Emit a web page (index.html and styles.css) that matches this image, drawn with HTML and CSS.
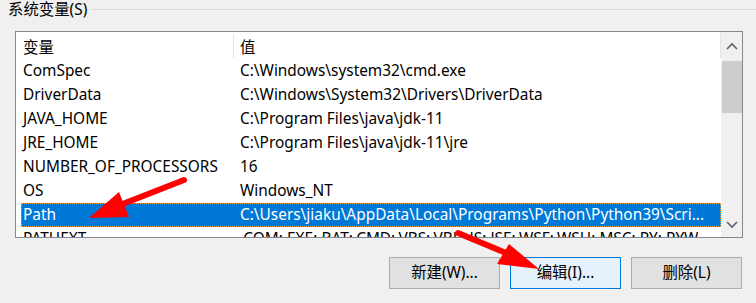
FILE: index.html
```html
<!DOCTYPE html>
<html lang="zh-CN">
<head>
<meta charset="utf-8">
<title>系统变量</title>
<link rel="stylesheet" href="styles.css">
</head>
<body>
<div class="page">
  <div class="group">
    <span class="group-title">系统变量(S)</span>
    <span class="group-line"></span>
  </div>
  <div class="listbox">
    <div class="list-content">
      <div class="header">
        <div class="hcell hc1">变量</div>
        <div class="hcell hc2">值</div>
      </div>
      <div class="row"><div class="c1">ComSpec</div><div class="c2">C:\Windows\system32\cmd.exe</div></div>
      <div class="row"><div class="c1">DriverData</div><div class="c2">C:\Windows\System32\Drivers\DriverData</div></div>
      <div class="row"><div class="c1">JAVA_HOME</div><div class="c2">C:\Program Files\java\jdk-11</div></div>
      <div class="row"><div class="c1">JRE_HOME</div><div class="c2">C:\Program Files\java\jdk-11\jre</div></div>
      <div class="row"><div class="c1">NUMBER_OF_PROCESSORS</div><div class="c2">16</div></div>
      <div class="row"><div class="c1">OS</div><div class="c2">Windows_NT</div></div>
      <div class="row selected"><div class="c1">Path</div><div class="c2">C:\Users\jiaku\AppData\Local\Programs\Python\Python39\Scri...</div></div>
      <div class="row"><div class="c1">PATHEXT</div><div class="c2">.COM;.EXE;.BAT;.CMD;.VBS;.VBE;.JS;.JSE;.WSF;.WSH;.MSC;.PY;.PYW</div></div>
    </div>
    <div class="scrollbar">
      <div class="sb-btn sb-up">
        <svg width="12" height="8" viewBox="0 0 12 8"><path d="M1 7 L6 2 L11 7" fill="none" stroke="#606060" stroke-width="1.6"/></svg>
      </div>
      <div class="sb-thumb"></div>
      <div class="sb-space"></div>
      <div class="sb-btn sb-down">
        <svg width="12" height="8" viewBox="0 0 12 8"><path d="M1 1 L6 6 L11 1" fill="none" stroke="#606060" stroke-width="1.6"/></svg>
      </div>
    </div>
  </div>
  <div class="buttons">
    <button class="btn">新建(W)...</button>
    <button class="btn btn-default">编辑(I)...</button>
    <button class="btn">删除(L)</button>
  </div>
  <svg class="arrows" width="756" height="303" viewBox="0 0 756 303">
    <line x1="184" y1="180" x2="120" y2="205" stroke="#ff0000" stroke-width="6" stroke-linecap="round"/>
    <polygon points="89,218 119,192 129,217" fill="#ff0000"/>
    <line x1="458" y1="233" x2="506" y2="253" stroke="#ff0000" stroke-width="6" stroke-linecap="round"/>
    <polygon points="539,269 509,244 497,264" fill="#ff0000"/>
  </svg>
</div>
</body>
</html>
```
FILE: styles.css
```css
* { box-sizing: border-box; }
html, body { margin: 0; padding: 0; }
body {
  background: #f0f0f0;
  font-family: "Noto Sans", "Noto Sans CJK SC", sans-serif;
  font-size: 15.4px;
  color: #000;
}
.page {
  position: relative;
  width: 756px;
  height: 303px;
  overflow: hidden;
  background: #f0f0f0;
}
.group {
  display: flex;
  height: 19px;
  padding-left: 8px;
}
.group-title {
  line-height: 19px;
  white-space: nowrap;
}
.group-line {
  flex: 1;
  margin-top: 9px;
  margin-left: 3px;
  height: 0;
  border-top: 1px solid #dcdcdc;
}
.listbox {
  margin-top: 12px;
  margin-left: 15px;
  width: 728px;
  height: 207px;
  border: 1px solid #828790;
  background: #fff;
  display: flex;
}
.list-content {
  width: 705px;
  overflow: hidden;
}
.header {
  display: flex;
  height: 27px;
  width: 705px;
}
.hcell {
  line-height: 27px;
  padding-top: 2px;
  white-space: nowrap;
}
.hc1 {
  width: 218px;
  padding-left: 7px;
  position: relative;
}
.hc1::after {
  content: "";
  position: absolute;
  right: 0;
  top: 2px;
  bottom: 1px;
  border-right: 1px solid #e5e5e5;
}
.hc2 {
  flex: 1;
  padding-left: 6px;
  position: relative;
}
.hc2::after {
  content: "";
  position: absolute;
  right: 0;
  top: 1px;
  bottom: 1px;
  border-right: 1px solid #e5e5e5;
}
.row {
  display: flex;
  height: 24px;
  line-height: 24px;
  margin-left: 5px;
  width: 700px;
  white-space: nowrap;
}
.c1 {
  width: 217px;
  padding-left: 2px;
  flex: none;
}
.c2 {
  padding-left: 2px;
  overflow: hidden;
}
.selected {
  background: #0078d7;
  color: #fff;
  outline: 1px dotted #f7a33a;
  outline-offset: -1px;
}
.scrollbar {
  width: 21px;
  background: #f0f0f0;
  display: flex;
  flex-direction: column;
}
.sb-btn {
  display: flex;
  align-items: center;
  justify-content: center;
}
.sb-up { height: 28px; }
.sb-thumb {
  margin-top: 1px;
  margin-left: 1px;
  height: 52px;
  background: #cdcdcd;
}
.sb-space { flex: 1; }
.sb-down { height: 24px; }
.buttons {
  display: flex;
  justify-content: flex-end;
  gap: 10px;
  margin-top: 19px;
  padding-right: 14px;
}
.btn {
  width: 111px;
  height: 32px;
  border: 1px solid #adadad;
  background: #e1e1e1;
  font-family: "Noto Sans", "Noto Sans CJK SC", sans-serif;
  font-size: 15.4px;
  color: #000;
  padding: 0;
  line-height: 30px;
}
.btn-default {
  border-color: #0078d7;
  background: #e5f1fb;
}
.arrows {
  position: absolute;
  left: 0;
  top: 0;
  pointer-events: none;
}
```
